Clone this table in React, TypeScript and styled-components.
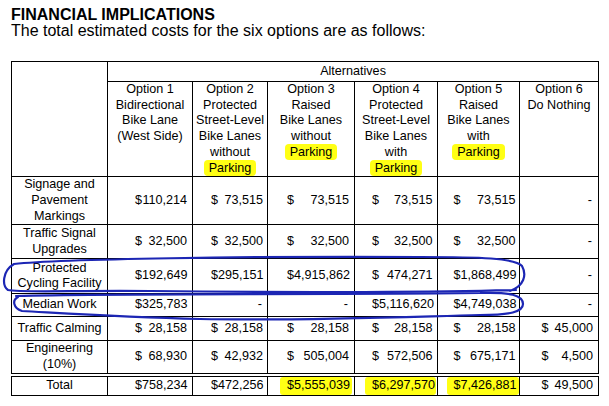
import styled, { createGlobalStyle } from "styled-components";

const GlobalStyle = createGlobalStyle`
  html, body {
    margin: 0;
    background: #fff;
  }
  body {
    font-family: "Liberation Sans", Arial, sans-serif;
    color: #000;
  }
`;

const Page = styled.div`
  position: relative;
  width: 609px;
  height: 406px;
  box-sizing: border-box;
  padding: 7px 0 0 11px;
  overflow: hidden;
`;

const Title = styled.h1`
  margin: 0;
  font-size: 16px;
  line-height: 16px;
  font-weight: 700;
`;

const Intro = styled.p`
  margin: 0;
  font-size: 16px;
  line-height: 16px;
`;

const Table = styled.table`
  margin-top: 22px;
  width: 587px;
  border-collapse: collapse;
  table-layout: fixed;
  font-size: 12.6px;
  line-height: 15.7px;

  td {
    border: 1px solid #000;
    padding: 0;
  }
`;

const Row = styled.tr<{ $h: number }>`
  height: ${(p) => p.$h}px;
`;

const TotalRow = styled.tr`
  height: 19px;

  td {
    border-top: 4px double #000;
  }
`;

const HeadCell = styled.td`
  text-align: center;
  vertical-align: top;
`;

const SpanHead = styled.td`
  text-align: center;
  vertical-align: middle;
`;

const Label = styled.td`
  text-align: center;
  vertical-align: middle;
`;

const ValueCell = styled.td`
  vertical-align: middle;
`;

const Amount = styled.div<{ $pl: number; $pr: number; $mark?: boolean }>`
  display: flex;
  justify-content: space-between;
  white-space: nowrap;
  margin-left: ${(p) => p.$pl - (p.$mark ? 7 : 0)}px;
  margin-right: ${(p) => p.$pr - (p.$mark ? 3 : 0)}px;
  padding: ${(p) => (p.$mark ? "1px 3px 1px 7px" : "0")};
  background: ${(p) => (p.$mark ? "#ffff14" : "transparent")};
  border-radius: 3px;
`;

const Dash = styled.div<{ $pr: number }>`
  text-align: right;
  padding-right: ${(p) => p.$pr + 1}px;
`;

const Mark = styled.span`
  background: #ffff14;
  border-radius: 4px;
  padding: 1px 5px 1px;
  margin: 0 -5px;
`;

const Ink = styled.svg`
  position: absolute;
  left: 0;
  top: 0;
  pointer-events: none;
`;

const widths = [96, 85, 75, 87, 83, 82, 79];

// where the "$" sits and how far the number stops from the right border
const pads: [number, number][] = [
  [27, 5],
  [18, 4],
  [19, 5],
  [17, 4.5],
  [15.5, 3.5],
  [21.5, 5],
];

const options: { lines: string[]; parking?: boolean }[] = [
  { lines: ["Option 1", "Bidirectional", "Bike Lane", "(West Side)"] },
  { lines: ["Option 2", "Protected", "Street-Level", "Bike Lanes", "without"], parking: true },
  { lines: ["Option 3", "Raised", "Bike Lanes", "without"], parking: true },
  { lines: ["Option 4", "Protected", "Street-Level", "Bike Lanes", "with"], parking: true },
  { lines: ["Option 5", "Raised", "Bike Lanes", "with"], parking: true },
  { lines: ["Option 6", "Do Nothing"] },
];

type CostRow = { label: string[]; values: (string | null)[]; h: number };

const rows: CostRow[] = [
  {
    label: ["Signage and", "Pavement", "Markings"],
    values: ["110,214", "73,515", "73,515", "73,515", "73,515", null],
    h: 48,
  },
  {
    label: ["Traffic Signal", "Upgrades"],
    values: ["32,500", "32,500", "32,500", "32,500", "32,500", null],
    h: 34,
  },
  {
    label: ["Protected", "Cycling Facility"],
    values: ["192,649", "295,151", "4,915,862", "474,271", "1,868,499", null],
    h: 35,
  },
  {
    label: ["Median Work"],
    values: ["325,783", null, null, "5,116,620", "4,749,038", null],
    h: 23,
  },
  {
    label: ["Traffic Calming"],
    values: ["28,158", "28,158", "28,158", "28,158", "28,158", "45,000"],
    h: 24,
  },
  {
    label: ["Engineering", "(10%)"],
    values: ["68,930", "42,932", "505,004", "572,506", "675,171", "4,500"],
    h: 34,
  },
];

const totals = ["758,234", "472,256", "5,555,039", "6,297,570", "7,426,881", "49,500"];
const markedTotals = [2, 3, 4];

function Value({ value, col, mark }: { value: string | null; col: number; mark?: boolean }) {
  const [pl, pr] = pads[col];
  return (
    <ValueCell>
      {value ? (
        <Amount $pl={pl} $pr={pr} $mark={mark}>
          <span>$</span>
          <span>{value}</span>
        </Amount>
      ) : (
        <Dash $pr={pr}>-</Dash>
      )}
    </ValueCell>
  );
}

function Lines({ lines }: { lines: string[] }) {
  return (
    <>
      {lines.map((l, i) => (
        <div key={i}>{l}</div>
      ))}
    </>
  );
}

export default function App() {
  return (
    <>
      <GlobalStyle />
      <Page>
        <Title>FINANCIAL IMPLICATIONS</Title>
        <Intro>The total estimated costs for the six options are as follows:</Intro>
        <Table>
          <colgroup>
            {widths.map((w, i) => (
              <col key={i} style={{ width: w }} />
            ))}
          </colgroup>
          <tbody>
            <Row $h={20}>
              <td rowSpan={2} />
              <SpanHead colSpan={6}>Alternatives</SpanHead>
            </Row>
            <Row $h={94}>
              {options.map((o, i) => (
                <HeadCell key={i}>
                  <Lines lines={o.lines} />
                  {o.parking && (
                    <div>
                      <Mark>Parking</Mark>
                    </div>
                  )}
                </HeadCell>
              ))}
            </Row>
            {rows.map((r, i) => (
              <Row key={i} $h={r.h}>
                <Label>
                  <Lines lines={r.label} />
                </Label>
                {r.values.map((v, j) => (
                  <Value key={j} value={v} col={j} />
                ))}
              </Row>
            ))}
            <TotalRow>
              <Label>Total</Label>
              {totals.map((v, j) => (
                <Value key={j} value={v} col={j} mark={markedTotals.includes(j)} />
              ))}
            </TotalRow>
          </tbody>
        </Table>
        <Ink width="609" height="406" viewBox="0 0 609 406">
          <g fill="none" stroke="#1c26b4" strokeWidth="2.2" strokeLinecap="round" strokeLinejoin="round">
            <path d="M 516 290 C 450 292, 300 293, 150 291 C 80 290, 22 293, 8 290 C 2 286, 2 271, 14 264 C 60 259, 250 256, 420 257 C 480 257, 515 258, 522 266 C 527 275, 524 286, 510 291" />
            <path d="M 16 296 C 120 293, 300 295, 480 293 C 510 292, 523 295, 523 304 C 523 312, 510 315, 480 315 C 400 317, 300 321, 200 319 C 120 317, 60 313, 22 311 C 13 308, 12 300, 18 297" />
          </g>
        </Ink>
      </Page>
    </>
  );
}
